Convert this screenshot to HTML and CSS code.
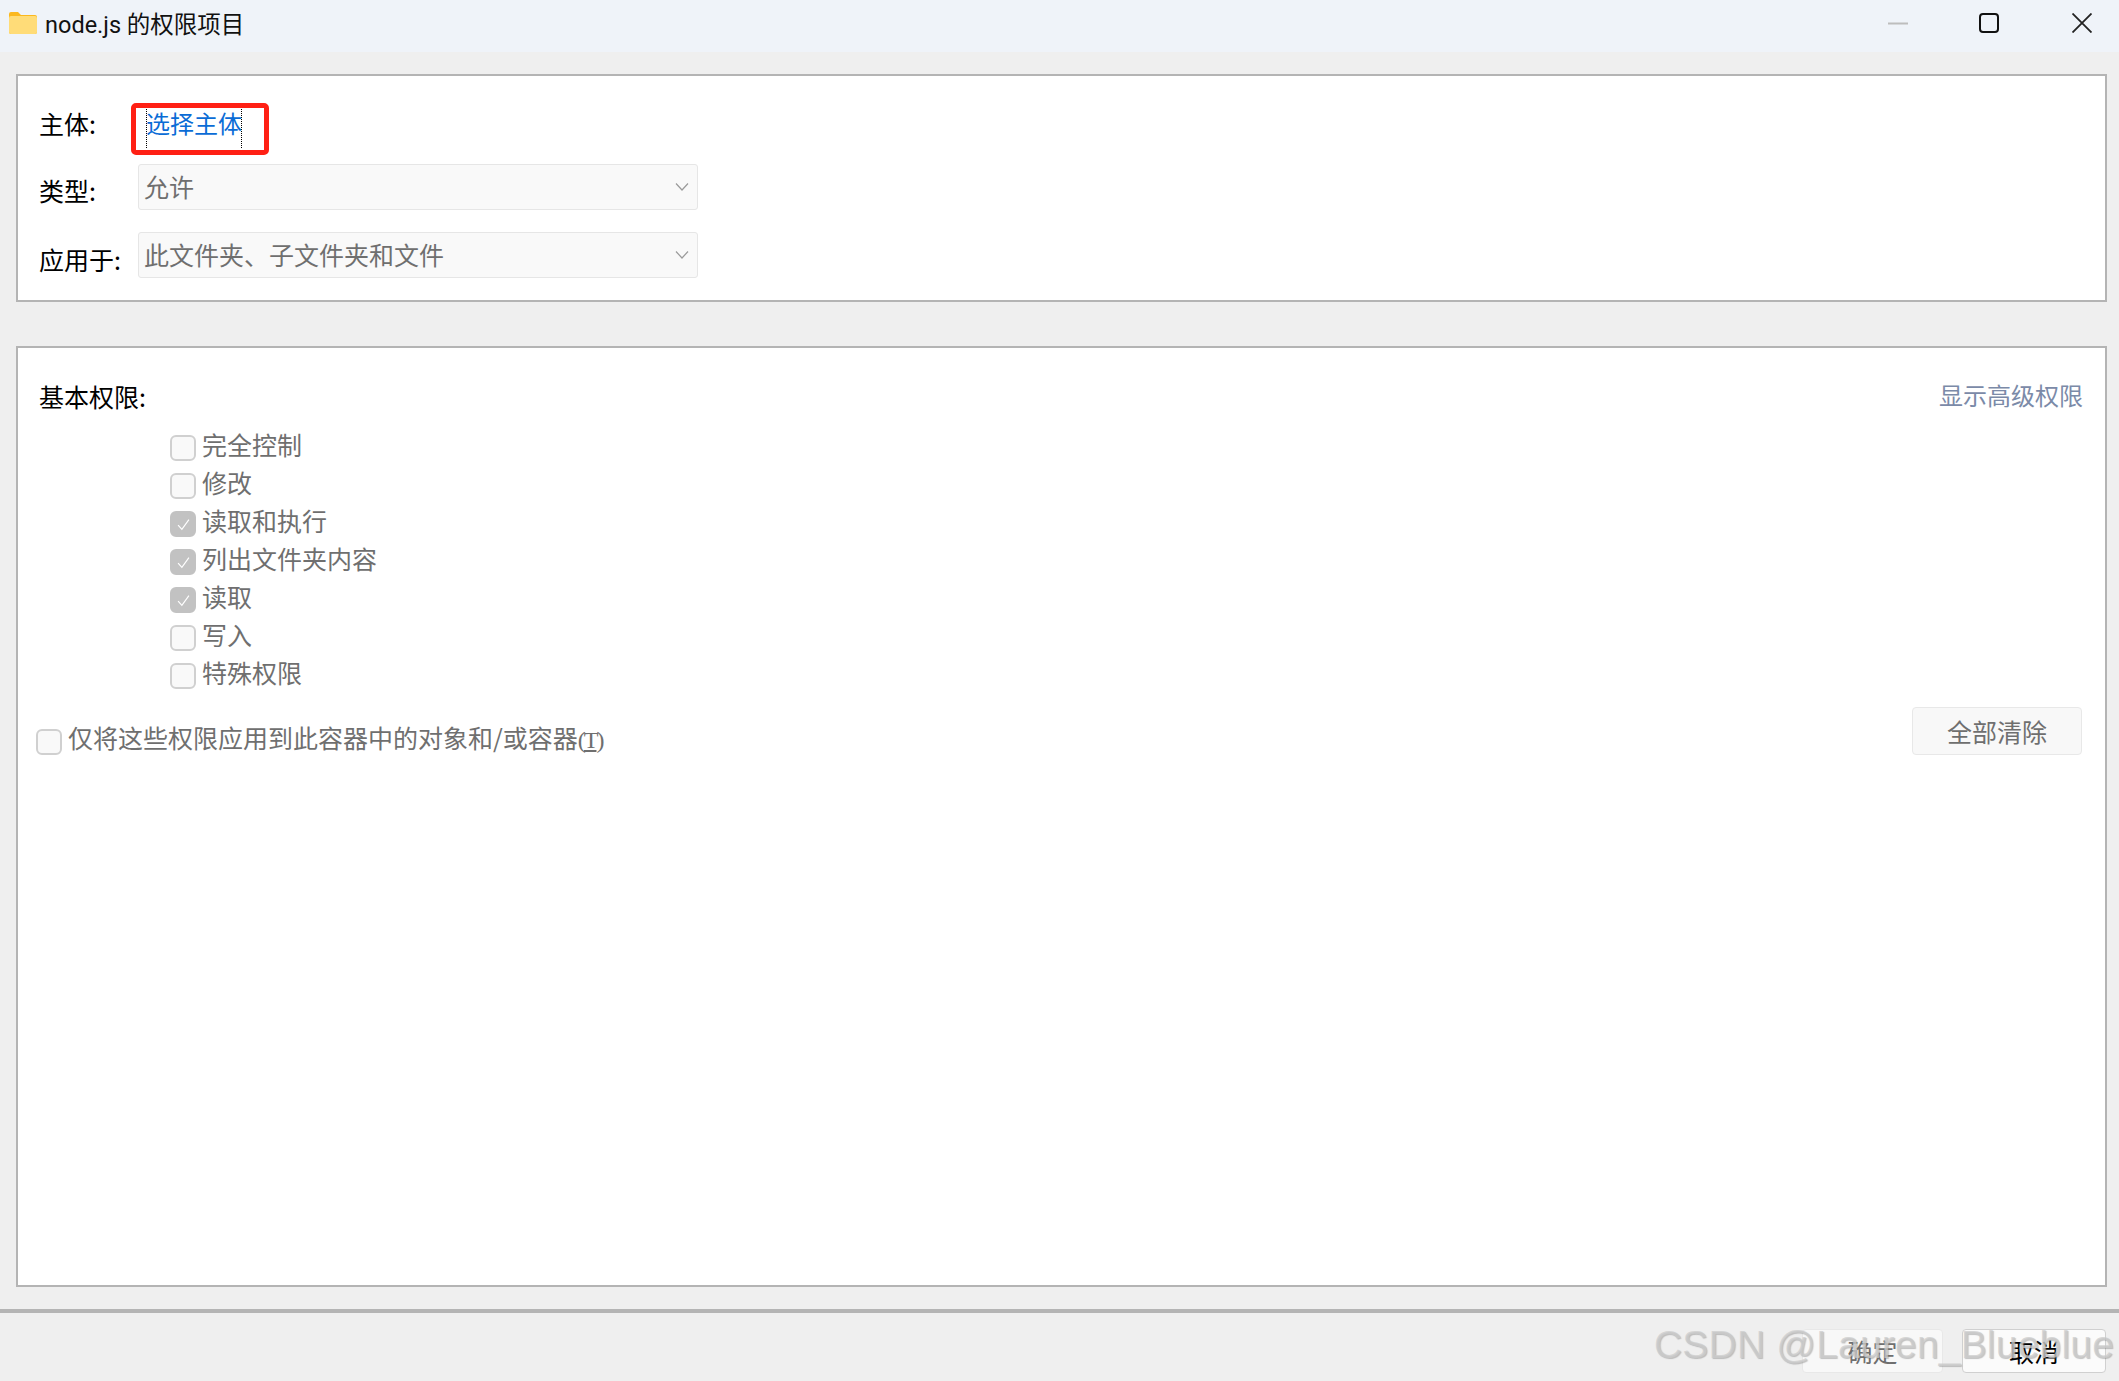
FILE: index.html
```html
<!DOCTYPE html>
<html lang="zh-CN">
<head>
<meta charset="utf-8">
<title>node.js 的权限项目</title>
<link rel="stylesheet" href="styles.css">
</head>
<body>
<div class="window">
  <header class="titlebar">
    <svg class="folder" width="28" height="22" viewBox="0 0 28 22"><path d="M0 2a2 2 0 0 1 2-2h7l3 3h14a2 2 0 0 1 2 2v15a2 2 0 0 1-2 2H2a2 2 0 0 1-2-2z" fill="#fbb81f"/><path d="M0 6a2 2 0 0 1 2-2h24a2 2 0 0 1 2 2v14a2 2 0 0 1-2 2H2a2 2 0 0 1-2-2z" fill="#ffdc78"/></svg>
    <span class="title">node.js 的权限项目</span>
    <div class="controls">
      <svg width="20" height="20" viewBox="0 0 20 20"><path d="M0 10.500h20" stroke="#bdbdbd" stroke-width="2" fill="none"/></svg>
      <svg width="20" height="20" viewBox="0 0 20 20"><rect x="1" y="1" width="18" height="18" rx="3" stroke="#111" stroke-width="2" fill="none"/></svg>
      <svg class="close" width="20" height="20" viewBox="0 0 20 20"><path d="M.5.500l19 19M19.500.500l-19 19" stroke="#222" stroke-width="1.800" fill="none"/></svg>
    </div>
  </header>

  <main class="content">
    <section class="panel panel-top">
      <div class="form">
        <span class="label label-subject">主体:</span>
        <div class="subject-cell"><a class="subject-link">选择主体</a></div>
        <span class="label label-type">类型:</span>
        <div class="combo combo-type"><span>允许</span><svg width="14" height="10" viewBox="0 0 14 10"><path d="M1 1.500l6 6.500 6-6.500" stroke="#9a9a9a" stroke-width="1.200" fill="none"/></svg></div>
        <span class="label label-apply">应用于:</span>
        <div class="combo combo-apply"><span>此文件夹、子文件夹和文件</span><svg width="14" height="10" viewBox="0 0 14 10"><path d="M1 1.500l6 6.500 6-6.500" stroke="#9a9a9a" stroke-width="1.200" fill="none"/></svg></div>
      </div>
    </section>

    <section class="panel panel-main">
      <div class="perm-head">
        <span class="perm-title">基本权限:</span>
        <a class="advanced">显示高级权限</a>
      </div>
      <ul class="perm-list">
        <li class="check-row"><span class="box"></span><span class="check-text">完全控制</span></li>
        <li class="check-row"><span class="box"></span><span class="check-text">修改</span></li>
        <li class="check-row"><span class="box checked"><svg width="13" height="13" viewBox="0 0 12 12"><path d="M1 6.500l3.500 4L11 1.500" stroke="#fff" stroke-width="1.100" fill="none"/></svg></span><span class="check-text">读取和执行</span></li>
        <li class="check-row"><span class="box checked"><svg width="13" height="13" viewBox="0 0 12 12"><path d="M1 6.500l3.500 4L11 1.500" stroke="#fff" stroke-width="1.100" fill="none"/></svg></span><span class="check-text">列出文件夹内容</span></li>
        <li class="check-row"><span class="box checked"><svg width="13" height="13" viewBox="0 0 12 12"><path d="M1 6.500l3.500 4L11 1.500" stroke="#fff" stroke-width="1.100" fill="none"/></svg></span><span class="check-text">读取</span></li>
        <li class="check-row"><span class="box"></span><span class="check-text">写入</span></li>
        <li class="check-row"><span class="box"></span><span class="check-text">特殊权限</span></li>
      </ul>
      <div class="apply-row">
        <div class="check-row"><span class="box"></span><span class="check-text">仅将这些权限应用到此容器中的对象和/或容器<span class="access">(<u>T</u>)</span></span></div>
        <button class="btn btn-clear" type="button">全部清除</button>
      </div>
    </section>
  </main>

  <footer class="footer">
    <button class="btn btn-ok" type="button">确定</button>
    <button class="btn btn-cancel" type="button">取消</button>
    <span class="watermark">CSDN @Lauren_Blueblue</span>
  </footer>
</div>
</body>
</html>
```
FILE: styles.css
```css
*, *::after { box-sizing: border-box; }
html, body { margin: 0; height: 100%; }
body {
  font-family: "Noto Sans CJK SC", "Noto Sans", sans-serif;
  font-size: 25px;
  background: #efefef;
  color: #000;
  overflow: hidden;
}
.window { display: flex; flex-direction: column; height: 1381px; }
.titlebar {
  display: flex; align-items: center; height: 52px; flex: none;
  padding: 0 27px 6px 9px;
  background: #eff3f9;
}
.folder { flex: none; }
.title {
  margin-left: 8px;
  font-family: Roboto, "Noto Sans CJK SC", sans-serif;
  font-size: 23.500px; color: #111; white-space: pre;
}
.controls { margin-left: auto; display: flex; gap: 71px; }
.controls svg { display: block; }
.controls .close { margin-left: 2px; }
.content {
  flex: 1; min-height: 0;
  display: flex; flex-direction: column; gap: 44px;
  padding: 22px 12px 22px 16px;
}
.panel { background: #fff; border: 2px solid #b4b4b4; padding: 0 22px; }
.panel-top { flex: none; height: 228px; padding-top: 33px; }
.panel-main { flex: 1; padding: 30px 23px 0 22px; }
.form {
  display: grid;
  grid-template-columns: 99px 560px;
  grid-template-rows: 39px 62px 68px;
  margin-left: -1px;
}
.label { line-height: 36px; white-space: nowrap; }
.label-subject { margin-top: -4px; }
.label-type { margin-top: 24px; }
.label-apply { margin-top: 31px; }
.subject-cell { padding-left: 8px; height: 39px; }
.subject-link {
  position: relative; display: block; width: 96px; height: 39px;
  color: #0a6cd6; font-size: 24px; line-height: 28px; text-indent: -1px;
  border-left: 1px dotted #000; border-right: 1px dotted #000;
  white-space: nowrap;
}
.subject-link::after {
  content: ""; position: absolute; left: -16px; top: -6px; width: 138px; height: 52px;
  border: 5px solid #ff2014; border-radius: 5px;
}
.combo {
  display: flex; align-items: center; justify-content: space-between;
  height: 46px; padding: 0 8px 0 5px;
  background: #f9f9f9; border: 1px solid #e6e6e6; border-radius: 3px;
  color: #6f6f6f;
}
.combo-type { margin-top: 16px; }
.combo-apply { margin-top: 22px; }
.combo span { line-height: 36px; margin-top: -2px; }
.combo svg { flex: none; }
.perm-head { display: flex; justify-content: space-between; height: 36px; line-height: 36px; }
.perm-title { margin-left: -1px; }
.advanced { color: #7b8aa8; font-size: 24px; margin-right: -1px; margin-top: -1px; }
.perm-list {
  list-style: none; margin: 21px 0 0 130px; padding: 0;
  display: flex; flex-direction: column; gap: 12px;
}
.check-row { display: flex; gap: 6px; height: 26px; color: #6f6f6f; }
.check-text { line-height: 25px; margin-top: -3px; white-space: nowrap; }
.apply-row .check-text { margin-top: -4px; }
.access { font-family: "Liberation Serif", serif; font-size: 24px; letter-spacing: -2px; }
.box {
  flex: none; width: 26px; height: 26px;
  display: flex; align-items: center; justify-content: center;
  background: #f9f9f9; border: 2px solid #d0d0d0; border-radius: 6px;
}
.box.checked { background: #c2c2c2; border-color: #c2c2c2; }
.apply-row {
  display: flex; justify-content: space-between; align-items: flex-end;
  margin: 18px 0 0 -4px; height: 48px;
}
.btn {
  font: inherit; padding: 0; display: block;
  border: 1px solid #e8e8e8; border-radius: 4px; background: #f8f8f8; color: #6f6f6f;
}
.btn-clear { width: 170px; height: 48px; }
.footer {
  position: relative; flex: none; height: 72px;
  display: flex; justify-content: flex-end; gap: 19px;
  padding: 16px 13px 0 0;
  border-top: 4px solid #b4b4b4;
}
.btn-ok { width: 141px; height: 44px; }
.btn-cancel { width: 144px; height: 44px; background: #fbfbfb; border-color: #d0d0d0; color: #000; }
.watermark {
  position: absolute; left: 1654px; top: 7px;
  font-family: "Liberation Sans", sans-serif; font-size: 39px; line-height: 50px; letter-spacing: .2px;
  color: rgba(205, 205, 205, .75);
  text-shadow: 1px 1px 1px rgba(110, 110, 110, .4);
  white-space: nowrap;
}
```
